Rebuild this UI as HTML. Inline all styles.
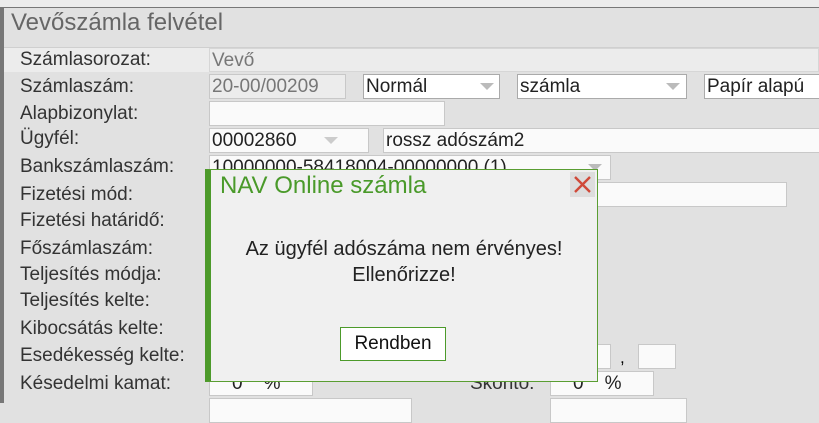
<!DOCTYPE html><html><head><meta charset="utf-8"><style>
body{margin:0;width:819px;height:403px;overflow:hidden;background:#e1e1e1;font-family:"Liberation Sans",Arial,sans-serif;position:relative}
div{position:absolute;box-sizing:border-box}
.l{left:20px;font-size:19px;color:#333;line-height:20px;white-space:nowrap}
.f{background:#fafafa;border:1px solid #c8c8c8;font-size:19px;color:#222;padding-left:2px;line-height:23px;white-space:nowrap;overflow:hidden}
.w{background:#fff;border-color:#aaa}
.ar{position:absolute;width:0;height:0;border-left:7px solid transparent;border-right:7px solid transparent;border-top:7px solid #bbb;top:8px}
</style></head><body>
<div style="left:0;top:0;width:819px;height:8px;background:#ececec;border-bottom:1px solid #777"></div>
<div style="left:0;top:7px;width:4px;height:396px;background:#777"></div>
<div style="left:4px;top:8px;width:815px;height:40px;background:#e1e1e1;border-bottom:1px solid #cfcfcf"></div>
<div style="left:11px;top:9px;font-size:24px;color:#666">Vevőszámla felvétel</div>
<div style="left:4px;top:48px;width:815px;height:24px;background:#ececec"></div>
<div class="l" style="top:50px">Számlasorozat:</div>
<div class="l" style="top:77px">Számlaszám:</div>
<div class="l" style="top:104px">Alapbizonylat:</div>
<div class="l" style="top:129px">Ügyfél:</div>
<div class="l" style="top:157px">Bankszámlaszám:</div>
<div class="l" style="top:185px">Fizetési mód:</div>
<div class="l" style="top:211px">Fizetési határidő:</div>
<div class="l" style="top:239px">Főszámlaszám:</div>
<div class="l" style="top:265px">Teljesítés módja:</div>
<div class="l" style="top:291px">Teljesítés kelte:</div>
<div class="l" style="top:319px">Kibocsátás kelte:</div>
<div class="l" style="top:346px">Esedékesség kelte:</div>
<div class="l" style="top:374px">Késedelmi kamat:</div>
<div class="f" style="left:209px;top:48px;width:610px;height:24px;background:#ececec;border-color:#d6d6d6;color:#777">Vevő</div>
<div class="f" style="left:209px;top:74px;width:137px;height:25px;background:#ececec;color:#777">20-00/00209</div>
<div class="f w" style="left:363px;top:74px;width:137px;height:25px">Normál<span class="ar" style="left:116px"></span></div>
<div class="f w" style="left:517px;top:74px;width:170px;height:25px">számla<span class="ar" style="left:148px"></span></div>
<div class="f w" style="left:704px;top:74px;width:120px;height:25px">Papír alapú</div>
<div class="f" style="left:209px;top:101px;width:236px;height:25px"></div>
<div class="f" style="left:209px;top:128px;width:160px;height:25px">00002860<span class="ar" style="left:114px;border-top-color:#ccc"></span></div>
<div class="f" style="left:383px;top:128px;width:440px;height:25px">rossz adószám2</div>
<div class="f" style="left:209px;top:155px;width:402px;height:25px">10000000-58418004-00000000 (1)<span class="ar" style="left:378px"></span></div>
<div class="f" style="left:590px;top:182px;width:197px;height:25px"></div>
<div class="f" style="left:566px;top:344px;width:45px;height:25px"></div>
<div style="left:620px;top:348px;font-size:17px">,</div>
<div class="f" style="left:638px;top:344px;width:38px;height:25px"></div>
<div class="f" style="left:209px;top:371px;width:104px;height:25px;padding-left:22px">0 &nbsp;&nbsp; %</div>
<div class="l" style="left:470px;top:374px">Skontó:</div>
<div class="f" style="left:550px;top:371px;width:104px;height:25px;padding-left:22px">0 &nbsp;&nbsp; %</div>
<div class="f" style="left:209px;top:398px;width:203px;height:25px"></div>
<div class="f" style="left:550px;top:398px;width:137px;height:25px"></div>
<div style="left:205px;top:169px;width:393px;height:213px;background:#f0f0f0;border:1px solid #5a9e32;border-left:6px solid #4c9a2a"></div>
<div style="left:220px;top:172px;font-size:24px;color:#4a9a2a">NAV Online számla</div>
<div style="left:570px;top:172px;width:25px;height:25px;background:#ddd"><svg width="25" height="25"><path d="M5 5L20 20M20 5L5 20" stroke="#d04a3a" stroke-width="2.4"/></svg></div>
<div style="left:211px;top:236px;width:386px;text-align:center;font-size:20px;color:#222;line-height:26px">Az ügyfél adószáma nem érvényes!<br>Ellenőrizze!</div>
<div style="left:340px;top:327px;width:106px;height:34px;background:#fff;border:1px solid #4c9a2a;text-align:center;font-size:19px;line-height:32px;color:#111">Rendben</div>
</body></html>
